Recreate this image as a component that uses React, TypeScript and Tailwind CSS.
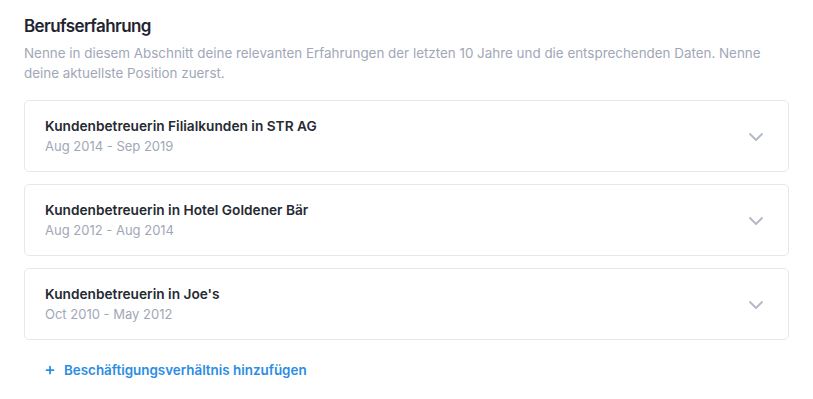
import { ChevronDown, Plus } from "lucide-react";

const jobs = [
  { title: "Kundenbetreuerin Filialkunden in STR AG", period: "Aug 2014 - Sep 2019" },
  { title: "Kundenbetreuerin in Hotel Goldener Bär", period: "Aug 2012 - Aug 2014" },
  { title: "Kundenbetreuerin in Joe's", period: "Oct 2010 - May 2012" },
];

export default function App() {
  return (
    <div className="min-h-screen bg-white px-6 pt-3 font-['Inter',sans-serif] antialiased">
      <h2 className="text-[17px] leading-7 font-semibold tracking-[-0.6px] text-[#1f2430]">Berufserfahrung</h2>
      <p className="mt-[3px] text-[13.4px] leading-5 text-[#a1a7b7]">
        Nenne in diesem Abschnitt deine relevanten Erfahrungen der letzten 10 Jahre und die entsprechenden Daten. Nenne
        deine aktuellste Position zuerst.
      </p>

      <div className="mt-[17px] flex flex-col gap-3">
        {jobs.map((job) => (
          <div
            key={job.title}
            className="flex items-center justify-between rounded-[5px] border border-[#e6e8ef] px-5 py-[15px]"
          >
            <div>
              <div className="text-[13.7px] leading-5 font-semibold text-[#262a33]">{job.title}</div>
              <div className="text-[13px] leading-5 text-[#a1a7b7]">{job.period}</div>
            </div>
            <ChevronDown className="mt-0.5 h-6 w-6 text-[#b3b8c6]" strokeWidth={1.8} />
          </div>
        ))}
      </div>

      <button className="mt-5 ml-5 flex items-center gap-2 text-[13.4px] leading-5 font-semibold text-[#2b8de3]">
        <Plus className="h-3 w-3" strokeWidth={3.5} />
        Beschäftigungsverhältnis hinzufügen
      </button>
    </div>
  );
}
